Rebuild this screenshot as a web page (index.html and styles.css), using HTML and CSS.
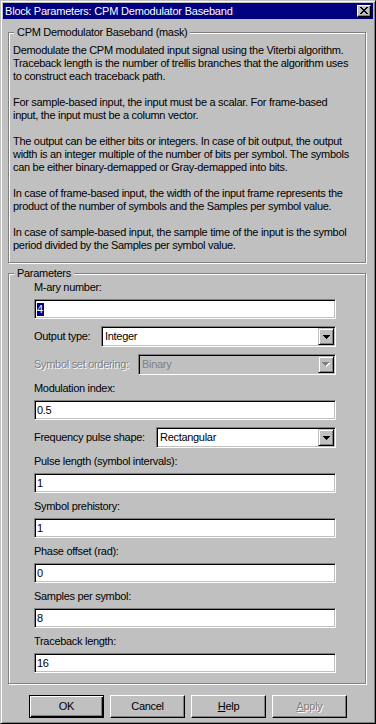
FILE: index.html
```html
<!DOCTYPE html>
<html>
<head>
<meta charset="utf-8">
<link rel="stylesheet" href="styles.css">
</head>
<body>
<div class="window">
  <div class="titlebar">
    <span class="title">Block Parameters: CPM Demodulator Baseband</span>
    <span class="close">
      <svg width="8" height="7" viewBox="0 0 8 7" shape-rendering="crispEdges">
        <rect x="0" y="0" width="2" height="1"/><rect x="6" y="0" width="2" height="1"/>
        <rect x="1" y="1" width="2" height="1"/><rect x="5" y="1" width="2" height="1"/>
        <rect x="2" y="2" width="4" height="1"/>
        <rect x="3" y="3" width="2" height="1"/>
        <rect x="2" y="4" width="4" height="1"/>
        <rect x="1" y="5" width="2" height="1"/><rect x="5" y="5" width="2" height="1"/>
        <rect x="0" y="6" width="2" height="1"/><rect x="6" y="6" width="2" height="1"/>
      </svg>
    </span>
  </div>
  <div class="content">
    <div class="group desc">
      <div class="legend">CPM Demodulator Baseband (mask)</div>
      <p>Demodulate the CPM modulated input signal using the Viterbi algorithm.<br>Traceback length is the number of trellis branches that the algorithm uses<br>to construct each traceback path.</p>
      <p>For sample-based input, the input must be a scalar. For frame-based<br>input, the input must be a column vector.</p>
      <p>The output can be either bits or integers. In case of bit output, the output<br>width is an integer multiple of the number of bits per symbol. The symbols<br>can be either binary-demapped or Gray-demapped into bits.</p>
      <p>In case of frame-based input, the width of the input frame represents the<br>product of the number of symbols and the Samples per symbol value.</p>
      <p>In case of sample-based input, the sample time of the input is the symbol<br>period divided by the Samples per symbol value.</p>
    </div>
    <div class="group params">
      <div class="legend">Parameters</div>
      <div class="field">
        <div class="label">M-ary number:</div>
        <div class="edit"><span class="selected">4</span></div>
      </div>
      <div class="row">
        <span class="label">Output type:</span>
        <div class="combo w-output"><span class="value">Integer</span><span class="arrow"><svg width="7" height="4" viewBox="0 0 7 4" shape-rendering="crispEdges"><rect x="0" y="0" width="7" height="1"/><rect x="1" y="1" width="5" height="1"/><rect x="2" y="2" width="3" height="1"/><rect x="3" y="3" width="1" height="1"/></svg></span></div>
      </div>
      <div class="row">
        <span class="label disabled">Symbol set ordering:</span>
        <div class="combo combo-disabled w-ordering"><span class="value">Binary</span><span class="arrow"><svg width="8" height="5" viewBox="0 0 8 5" shape-rendering="crispEdges"><g fill="#fff"><rect x="1" y="1" width="7" height="1"/><rect x="2" y="2" width="5" height="1"/><rect x="3" y="3" width="3" height="1"/><rect x="4" y="4" width="1" height="1"/></g><g fill="#808080"><rect x="0" y="0" width="7" height="1"/><rect x="1" y="1" width="5" height="1"/><rect x="2" y="2" width="3" height="1"/><rect x="3" y="3" width="1" height="1"/></g></svg></span></div>
      </div>
      <div class="field">
        <div class="label">Modulation index:</div>
        <div class="edit">0.5</div>
      </div>
      <div class="row">
        <span class="label">Frequency pulse shape:</span>
        <div class="combo w-pulse"><span class="value">Rectangular</span><span class="arrow"><svg width="7" height="4" viewBox="0 0 7 4" shape-rendering="crispEdges"><rect x="0" y="0" width="7" height="1"/><rect x="1" y="1" width="5" height="1"/><rect x="2" y="2" width="3" height="1"/><rect x="3" y="3" width="1" height="1"/></svg></span></div>
      </div>
      <div class="field">
        <div class="label">Pulse length (symbol intervals):</div>
        <div class="edit">1</div>
      </div>
      <div class="field">
        <div class="label">Symbol prehistory:</div>
        <div class="edit">1</div>
      </div>
      <div class="field">
        <div class="label">Phase offset (rad):</div>
        <div class="edit">0</div>
      </div>
      <div class="field">
        <div class="label">Samples per symbol:</div>
        <div class="edit">8</div>
      </div>
      <div class="field last">
        <div class="label">Traceback length:</div>
        <div class="edit">16</div>
      </div>
    </div>
    <div class="buttons">
      <div class="btn default">OK</div>
      <div class="btn">Cancel</div>
      <div class="btn"><span><u>H</u>elp</span></div>
      <div class="btn btn-disabled"><span><u>A</u>pply</span></div>
    </div>
  </div>
</div>
</body>
</html>
```

FILE: styles.css
```css
* { box-sizing: border-box; }
html, body { margin: 0; padding: 0; }
body {
  width: 376px;
  height: 724px;
  overflow: hidden;
  background: #c0c0c0;
  color: #000;
  font-family: "Liberation Sans", Arial, sans-serif;
  font-size: 11px;
  letter-spacing: -0.3px;
  line-height: 13px;
}
.window {
  width: 376px;
  height: 724px;
  background: #c0c0c0;
  border: 1px solid;
  border-color: #c0c0c0 #000 #000 #c0c0c0;
  box-shadow: inset 1px 1px 0 #fff, inset -1px -1px 0 #808080;
  padding: 2px;
}
.titlebar {
  height: 16px;
  background: #000080;
  color: #fff;
  display: flex;
  align-items: center;
  justify-content: space-between;
  padding: 0 2px;
}
.title {
  font-size: 11px;
  letter-spacing: -0.2px;
  line-height: 16px;
  white-space: nowrap;
}
.close {
  width: 14px;
  height: 12px;
  background: #c0c0c0;
  border: 1px solid;
  border-color: #fff #000 #000 #fff;
  box-shadow: inset -1px -1px 0 #808080;
  display: flex;
  align-items: center;
  justify-content: center;
  padding-bottom: 1px;
}
.content {
  padding: 13px 0 0 5px;
}
.group {
  position: relative;
  width: 358px;
  border: 1px solid #808080;
  box-shadow: inset 1px 1px 0 #fff, 1px 1px 0 #fff;
}
.legend {
  position: absolute;
  top: -7px;
  left: 5px;
  padding: 0 3px;
  background: #c0c0c0;
  line-height: 13px;
  white-space: nowrap;
}
.desc {
  height: 231px;
  padding: 11px 4px 10px 4px;
  white-space: nowrap;
}
.desc p {
  margin: 0 0 13px 0;
}
.desc p:last-child { margin-bottom: 0; }
.params {
  margin-top: 10px;
  height: 411px;
  padding: 7px 29px 0 25px;
}
.field { margin-bottom: 7px; }
.field.last { margin-bottom: 0; }
.field .label {
  line-height: 13px;
  margin-bottom: 5px;
  white-space: nowrap;
}
.edit {
  height: 20px;
  background: #fff;
  border: 1px solid;
  border-color: #808080 #fff #fff #808080;
  box-shadow: inset 1px 1px 0 #000, inset -1px -1px 0 #c0c0c0;
  padding-left: 2px;
  line-height: 18px;
  white-space: nowrap;
}
.selected {
  background: #000080;
  color: #fff;
  display: inline-block;
  line-height: 13px;
  padding: 0 1px 0 0;
  vertical-align: middle;
  margin-top: -2px;
}
.row {
  height: 21px;
  margin-bottom: 7px;
  display: flex;
  align-items: center;
  justify-content: space-between;
}
.row .label { white-space: nowrap; }
.disabled {
  color: #808080;
  text-shadow: 1px 1px 0 #fff;
}
.combo {
  height: 21px;
  background: #fff;
  border: 1px solid;
  border-color: #808080 #fff #fff #808080;
  box-shadow: inset 1px 1px 0 #000, inset -1px -1px 0 #c0c0c0;
  padding: 1px;
  display: flex;
  align-items: center;
}
.combo .value {
  padding-left: 2px;
  white-space: nowrap;
}
.combo-disabled {
  background: #c0c0c0;
  color: #808080;
}
.w-output { width: 235px; }
.w-ordering { width: 198px; }
.w-pulse { width: 180px; }
.arrow {
  margin-left: auto;
  width: 16px;
  height: 17px;
  background: #c0c0c0;
  border: 1px solid;
  border-color: #c0c0c0 #000 #000 #c0c0c0;
  box-shadow: inset 1px 1px 0 #fff, inset -1px -1px 0 #808080;
  display: flex;
  align-items: center;
  justify-content: center;
}
.buttons {
  display: flex;
  gap: 6px;
  margin-top: 11px;
  padding-left: 21px;
}
.btn {
  width: 75px;
  height: 23px;
  border: 1px solid;
  border-color: #fff #000 #000 #fff;
  box-shadow: inset -1px -1px 0 #808080;
  display: flex;
  align-items: center;
  justify-content: center;
  white-space: nowrap;
}
.btn.default {
  border-color: #000;
  box-shadow: inset 1px 1px 0 #fff, inset -1px -1px 0 #000, inset -2px -2px 0 #808080;
}
.btn-disabled {
  color: #808080;
  text-shadow: 1px 1px 0 #fff;
}
```
